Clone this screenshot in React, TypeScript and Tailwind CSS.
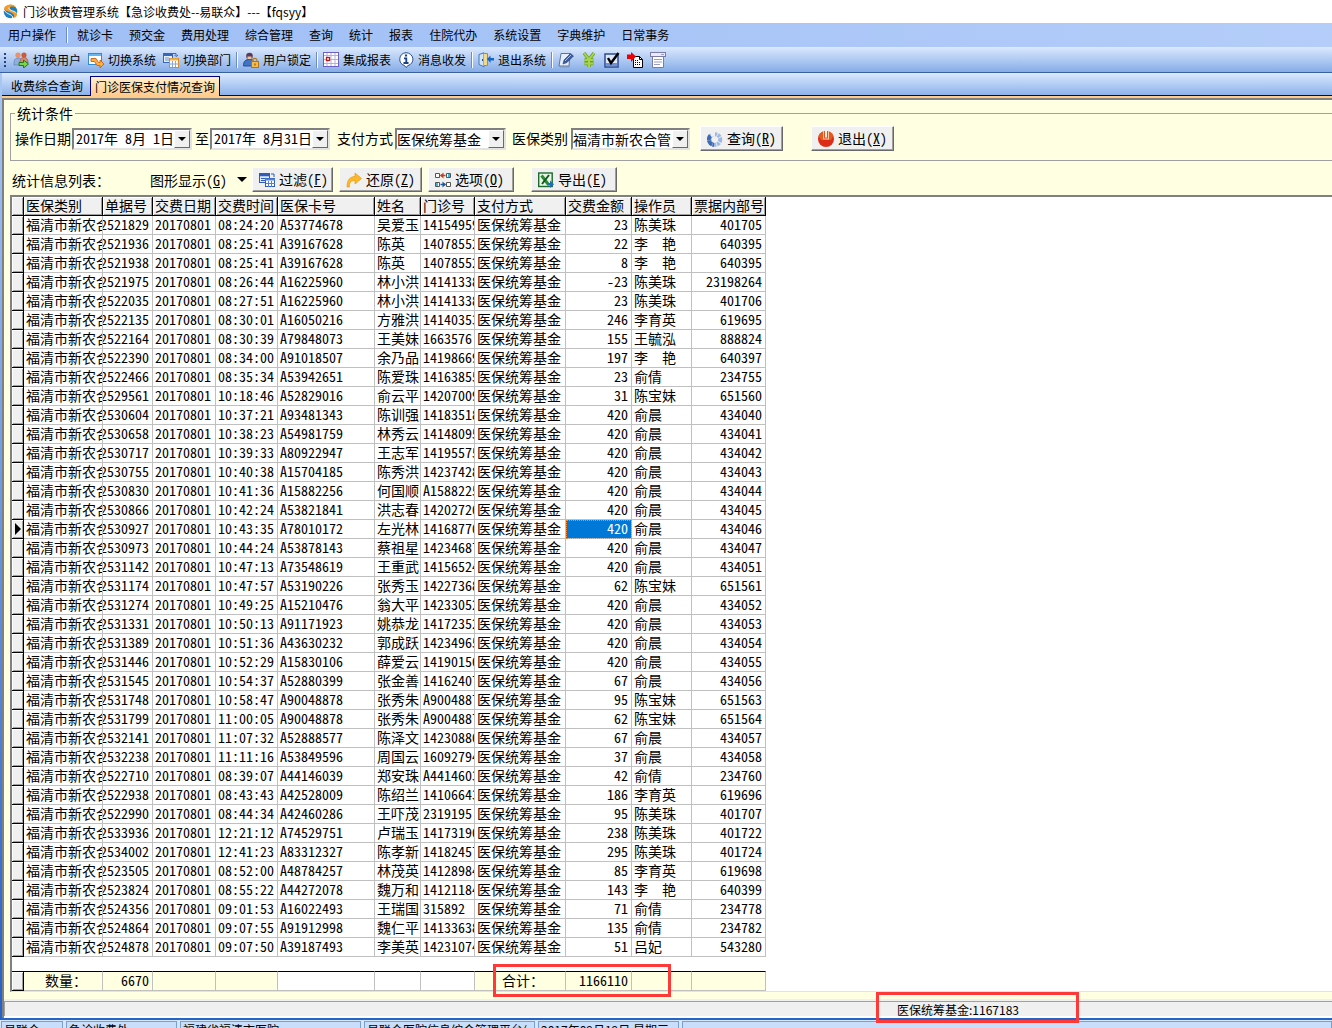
import { useState } from 'react';
import type { ReactNode } from 'react';
import clsx from 'clsx';

const menus = ['就诊卡', '预交金', '费用处理', '综合管理', '查询', '统计', '报表', '住院代办', '系统设置', '字典维护', '日常事务'];

const columns = ['医保类别', '单据号', '交费日期', '交费时间', '医保卡号', '姓名', '门诊号', '支付方式', '交费金额', '操作员', '票据内部号'];
const rightAligned = [1, 8, 10];

// 单据号, 交费时间, 医保卡号, 姓名, 门诊号, 交费金额, 操作员, 票据内部号
const records = [
  ['2521829', '08:24:20', 'A53774678', '吴爱玉', '14154959', '23', '陈美珠', '401705'],
  ['2521936', '08:25:41', 'A39167628', '陈英', '14078552', '22', '李　　艳', '640395'],
  ['2521938', '08:25:41', 'A39167628', '陈英', '14078552', '8', '李　　艳', '640395'],
  ['2521975', '08:26:44', 'A16225960', '林小洪', '14141338', '-23', '陈美珠', '23198264'],
  ['2522035', '08:27:51', 'A16225960', '林小洪', '14141338', '23', '陈美珠', '401706'],
  ['2522135', '08:30:01', 'A16050216', '方雅洪', '14140353', '246', '李育英', '619695'],
  ['2522164', '08:30:39', 'A79848073', '王美妹', '1663576', '155', '王毓泓', '888824'],
  ['2522390', '08:34:00', 'A91018507', '余乃品', '14198669', '197', '李　　艳', '640397'],
  ['2522466', '08:35:34', 'A53942651', '陈爱珠', '14163855', '23', '俞倩', '234755'],
  ['2529561', '10:18:46', 'A52829016', '俞云平', '14207009', '31', '陈宝妹', '651560'],
  ['2530604', '10:37:21', 'A93481343', '陈训强', '14183518', '420', '俞晨', '434040'],
  ['2530658', '10:38:23', 'A54981759', '林秀云', '14148095', '420', '俞晨', '434041'],
  ['2530717', '10:39:33', 'A80922947', '王志军', '14195575', '420', '俞晨', '434042'],
  ['2530755', '10:40:38', 'A15704185', '陈秀洪', '14237428', '420', '俞晨', '434043'],
  ['2530830', '10:41:36', 'A15882256', '何国顺', 'A1588225', '420', '俞晨', '434044'],
  ['2530866', '10:42:24', 'A53821841', '洪志春', '14202720', '420', '俞晨', '434045'],
  ['2530927', '10:43:35', 'A78010172', '左光林', '14168770', '420', '俞晨', '434046'],
  ['2530973', '10:44:24', 'A53878143', '蔡祖星', '14234687', '420', '俞晨', '434047'],
  ['2531142', '10:47:13', 'A73548619', '王重武', '14156524', '420', '俞晨', '434051'],
  ['2531174', '10:47:57', 'A53190226', '张秀玉', '14227368', '62', '陈宝妹', '651561'],
  ['2531274', '10:49:25', 'A15210476', '翁大平', '14233052', '420', '俞晨', '434052'],
  ['2531331', '10:50:13', 'A91171923', '姚恭龙', '14172352', '420', '俞晨', '434053'],
  ['2531389', '10:51:36', 'A43630232', '郭成跃', '14234965', '420', '俞晨', '434054'],
  ['2531446', '10:52:29', 'A15830106', '薛爱云', '14190150', '420', '俞晨', '434055'],
  ['2531545', '10:54:37', 'A52880399', '张金善', '14162407', '67', '俞晨', '434056'],
  ['2531748', '10:58:47', 'A90048878', '张秀朱', 'A9004887', '95', '陈宝妹', '651563'],
  ['2531799', '11:00:05', 'A90048878', '张秀朱', 'A9004887', '62', '陈宝妹', '651564'],
  ['2532141', '11:07:32', 'A52888577', '陈泽文', '14230880', '67', '俞晨', '434057'],
  ['2532238', '11:11:16', 'A53849596', '周国云', '16092794', '37', '俞晨', '434058'],
  ['2522710', '08:39:07', 'A44146039', '郑安珠', 'A4414603', '42', '俞倩', '234760'],
  ['2522938', '08:43:43', 'A42528009', '陈绍兰', '14106643', '186', '李育英', '619696'],
  ['2522990', '08:44:34', 'A42460286', '王吓茂', '2319195', '95', '陈美珠', '401707'],
  ['2533936', '12:21:12', 'A74529751', '卢瑞玉', '14173190', '238', '陈美珠', '401722'],
  ['2534002', '12:41:23', 'A83312327', '陈孝新', '14182457', '295', '陈美珠', '401724'],
  ['2523505', '08:52:00', 'A48784257', '林茂英', '14128984', '85', '李育英', '619698'],
  ['2523824', '08:55:22', 'A44272078', '魏万和', '14121184', '143', '李　　艳', '640399'],
  ['2524356', '09:01:53', 'A16022493', '王瑞国', '315892', '71', '俞倩', '234778'],
  ['2524864', '09:07:55', 'A91912998', '魏仁平', '14133638', '135', '俞倩', '234782'],
  ['2524878', '09:07:50', 'A39187493', '李美英', '14231074', '51', '吕妃', '543280'],
];

const rows = records.map(([no, time, card, name, clinic, amount, operator, ticket]) => [
  '福清市新农合', no, '20170801', time, card, name, clinic, '医保统筹基金', amount, operator, ticket,
]);

const summary = ['数量：', '6670', '', '', '', '', '', '合计：', '1166110', '', ''];

function Icon({ children }: { children: ReactNode }) {
  return (
    <svg className="size-4 shrink-0" viewBox="0 0 16 16" fill="none" aria-hidden="true">
      {children}
    </svg>
  );
}

const UsersIcon = () => (
  <Icon>
    <circle cx="5" cy="3" r="2.6" fill="#e8916a" />
    <circle cx="11" cy="3" r="2.6" fill="#c65c3c" />
    <path d="M1 13c0-5 1-7 4-7s4 2 4 7z" fill="#8fb0dc" stroke="#5d7fb5" strokeWidth=".7" />
    <path d="M7 11c0-4 1-5.5 4-5.5s4 2 4 5.5z" fill="#d98873" stroke="#a9553f" strokeWidth=".7" />
    <path d="M6 10.500h4.500V8l5 4-5 4v-2.500H6z" fill="#7fd34b" stroke="#1f7a1a" />
  </Icon>
);

const SystemIcon = () => (
  <Icon>
    <rect x=".5" y="1.500" width="13" height="11" fill="#fff" stroke="#2f8fd6" />
    <path d="M1 3h12" stroke="#63b7ee" strokeWidth="2" />
    <path d="M3 6.500h5l2.500 4H12V8l4 4-4 4v-2.500H9L6.500 9.500H3z" fill="#fbb040" stroke="#c9601c" strokeWidth=".9" />
  </Icon>
);

const DeptIcon = () => (
  <Icon>
    <rect x=".5" y="1.500" width="9" height="9" fill="#e5effc" stroke="#3566b8" />
    <path d="M1 3h8" stroke="#3566b8" strokeWidth="2" />
    <path d="M2 6h4M2 8h4" stroke="#6f94d0" />
    <path d="M10 1.500h3v2M11.500 3l1.500 1.500L15 3" stroke="#3566b8" />
    <rect x="6.500" y="6.500" width="9" height="9" fill="#fff" stroke="#d98d28" />
    <path d="M7 7.500h8" stroke="#f7b24c" strokeWidth="2" />
    <path d="M9.500 9v6M12.500 9v6M7 12h8" stroke="#8aa8d8" />
  </Icon>
);

const LockIcon = () => (
  <Icon>
    <circle cx="6.500" cy="4" r="3.300" fill="#5b3a57" />
    <path d="M4.500 4.500h4v2.500h-4z" fill="#efc19d" />
    <path d="M.5 14c0-5 2-6.500 6-6.500s5 2 5 6.500z" fill="#3f74c4" stroke="#254f95" />
    <path d="M9.500 10V8.500a2.200 2.200 0 0 1 4.400 0V10" stroke="#b77a1f" strokeWidth="1.200" />
    <rect x="8.500" y="9.500" width="7" height="6" fill="#f7b94a" stroke="#b0721b" />
    <path d="M12 11.500v2" stroke="#6b4410" />
  </Icon>
);

const ReportIcon = () => (
  <Icon>
    <rect x=".5" y=".5" width="15" height="14" fill="#fff" stroke="#6b5fc0" />
    <path d="M1 3.500h14M1 7.500h14M1 11.500h14M4 1v13M8 1v13M12 1v13" stroke="#b4aee6" />
    <rect x="3.500" y="5.500" width="3" height="3" fill="#fff" stroke="#c01818" strokeWidth="1.300" />
  </Icon>
);

const InfoIcon = () => (
  <Icon>
    <path d="M8 .7a7 6.600 0 0 1 2 12.900L8 15.500l-1.500-2A7 6.600 0 0 1 8 .7z" fill="#fff" stroke="#23508f" />
    <path d="M8 2.500v2" stroke="#16438c" strokeWidth="2.200" />
    <path d="M6 6.300h2.300v4.500M5.500 11h5" stroke="#16438c" strokeWidth="1.800" />
  </Icon>
);

const ExitIcon = () => (
  <Icon>
    <path d="M1 2.500 6 .8v14L1 12.500z" fill="#cfe3fa" stroke="#4377b8" />
    <path d="M6 1.500h3.500v12H6" fill="#f3d98b" stroke="#b28a36" />
    <path d="M4.500 7v2" stroke="#274f8a" />
    <path d="m9 7 3.500-3.500V6H16v2.500h-3.500V11z" fill="#1565c8" />
  </Icon>
);

const NoteIcon = () => (
  <Icon>
    <path d="M3 1.500h9l-1 12.500H1z" fill="#e6eefb" stroke="#5d7499" />
    <path d="m5 12 1-4 6.500-6.500 3 2.500L9 10.500z" fill="#3e5c9a" stroke="#293f70" strokeWidth=".6" />
    <path d="m7 9 6-6" stroke="#a9c0ec" />
    <path d="M2 15h10" stroke="#8596b5" />
  </Icon>
);

const YuanIcon = () => (
  <Icon>
    <path d="m3 1 5 6.500L13 1M8 7v8M3.500 8h9M3.500 11.500h9" stroke="#6da02a" strokeWidth="3.400" />
    <path d="m3 1 5 6.500L13 1M8 7v8M3.500 8h9M3.500 11.500h9" stroke="#a6d44b" strokeWidth="2" />
  </Icon>
);

const TickIcon = () => (
  <Icon>
    <rect x="1" y="2" width="13" height="13" fill="#dfe9fb" stroke="#2c4b94" strokeWidth="1.500" />
    <path d="M2 12.500h11" stroke="#6f8fd8" strokeWidth="3" />
    <path d="m4 6 3 5L14.500 1" stroke="#000" strokeWidth="2.400" />
  </Icon>
);

const TransferIcon = () => (
  <Icon>
    <path d="M6.500 4.500h6l3 3v8h-9z" fill="#fff" stroke="#000" />
    <path d="M12.500 4.500v3h3" stroke="#000" />
    <path d="M8 8.500h3M8 10.500h6M8 12.500h6" stroke="#000" strokeDasharray="1 1" />
    <path d="M0 2.500h4V0l5 4.500L4 10V7H0z" fill="#f00000" />
  </Icon>
);

const FormIcon = () => (
  <Icon>
    <path d="M2.500 4.500h11v11h-11z" fill="#fff" stroke="#7a7ca8" />
    <rect x=".5" y=".5" width="15" height="4" fill="#eceaf8" stroke="#7a7ca8" />
    <path d="M11 2.500h3M4 7.500h8M4 10h8M4 12.500h6" stroke="#9a9cc6" />
  </Icon>
);

const QueryIcon = () => (
  <Icon>
    <circle cx="8" cy="8.500" r="5.300" stroke="#9db8e2" strokeWidth="4" strokeDasharray="2.600 .8" />
    <path d="M3.500 4.500A5.500 5.500 0 0 0 7 13.900" stroke="#3d6cb4" strokeWidth="4" strokeDasharray="5 .5" />
    <path d="M4 0h4v5.500H4z" fill="#f0f0f0" />
  </Icon>
);

const PowerIcon = () => (
  <Icon>
    <circle cx="8" cy="8" r="8" fill="#dc2b17" />
    <path d="M.6 5a8 8 0 0 1 14.800 0L13 9H3z" fill="#e9591b" />
    <path d="M5 0h6v8.500H5z" fill="#f3c9a0" />
    <path d="M6 0h4v7.500H6z" fill="#e8501c" />
    <path d="M8 0v6.500" stroke="#fff" strokeWidth="1.800" />
  </Icon>
);

const FilterIcon = () => (
  <Icon>
    <rect x=".5" y="1.500" width="10" height="9" fill="#dce8fb" stroke="#2e5cb8" />
    <path d="M0 3h11" stroke="#2e5cb8" strokeWidth="2.500" />
    <path d="M2 6.500h4M2 8.500h4M12 2h3v3" stroke="#2e5cb8" />
    <rect x="6.500" y="6.500" width="9" height="8" fill="#fff" stroke="#2e5cb8" />
    <path d="M6 7.500h10" stroke="#4f80da" strokeWidth="2" />
    <path d="M9.500 9v6M12.500 9v6M7 11.500h9" stroke="#4f80da" />
  </Icon>
);

const RestoreIcon = () => (
  <Icon>
    <path d="M1 15C1 8 4 4.500 9 4.500V1l6.500 5.500L9 12V8.500c-4 0-6 2-5.500 6.500z" fill="#fbb829" stroke="#e89a15" strokeWidth=".7" />
  </Icon>
);

const OptionsIcon = () => (
  <Icon>
    <path d="M.5 1.500h4v4h-4zM11.500 1.500h4v4h-4zM.5 10.500h4v4h-4zM11.500 10.500h4v4h-4z" fill="#fff" stroke="#555" />
    <path d="M13 2h2v3h-2zM1 11h2v3H1z" fill="#37b6e8" />
    <path d="M5.500 3.500h5" stroke="#c2401c" strokeWidth="1.500" />
    <path d="M8.500.5 5 3.500l3.500 3z" fill="#c2401c" />
    <path d="M5.500 12.500h5" stroke="#1c5a9c" strokeWidth="1.500" />
    <path d="m7.500 9.500 3.500 3-3.500 3z" fill="#1c5a9c" />
  </Icon>
);

const ExcelIcon = () => (
  <Icon>
    <rect x=".7" y="1" width="13.500" height="13.500" fill="#e9f6e6" stroke="#1c6b2c" strokeWidth="1.400" />
    <path d="m3.500 3.500 6.500 8.500" stroke="#2a8a38" strokeWidth="3" />
    <path d="m11 3-7 9" stroke="#14581f" strokeWidth="2" />
    <path d="M9 11h3V8.500l4 3.700-4 3.800v-2.500H9z" fill="#1f6fb8" />
  </Icon>
);

function ToolItem({ icon, label }: { icon: ReactNode; label: string }) {
  return (
    <button className="flex items-center gap-1 whitespace-nowrap">
      {icon}
      {label}
    </button>
  );
}

const Divider = () => <span className="-mx-0.5 h-4 w-0.5 border-l border-r border-l-[#6a8ccb] border-r-white" />;

function PushButton({ icon, label, hotkey, className }: { icon: ReactNode; label: string; hotkey: string; className?: string }) {
  return (
    <button
      className={clsx(
        'flex h-[25px] items-center gap-1 border border-t-white border-l-white border-r-[#696969] border-b-[#696969] bg-[#f0f0f0] pl-1.5 whitespace-nowrap shadow-[inset_-1px_-1px_#a0a0a0]',
        className,
      )}
    >
      {icon}
      <span className="pb-0.5">
        {label}(<u>{hotkey}</u>)
      </span>
    </button>
  );
}

const Caret = () => (
  <span className="flex h-full w-4 items-center justify-center border border-t-white border-l-white border-r-[#696969] border-b-[#696969] bg-[#f0f0f0]">
    <svg className="h-1 w-2" viewBox="0 0 8 4" aria-hidden="true">
      <path d="M0 0h8L4 4z" fill="#000" />
    </svg>
  </span>
);

const sunken = 'h-[22px] border-2 border-t-[#808080] border-l-[#808080] border-r-[#e3e3e3] border-b-[#e3e3e3] bg-white';

function DateField({ id, value, className }: { id: string; value: string; className?: string }) {
  return (
    <div className={clsx('flex', sunken, className)}>
      <input id={id} type="text" defaultValue={value} className="min-w-0 flex-1 pb-0.5 pl-0.5 leading-4 outline-none [font-feature-settings:'hwid']" />
      <button aria-label="打开日历">
        <Caret />
      </button>
    </div>
  );
}

function SelectField({ id, options, className }: { id: string; options: string[]; className?: string }) {
  return (
    <div className={clsx('relative', sunken, className)}>
      <select id={id} className="h-full w-full appearance-none overflow-hidden pr-4 pb-0.5 leading-4 outline-none">
        {options.map(o => <option key={o}>{o}</option>)}
      </select>
      <span className="pointer-events-none absolute inset-y-0 right-0">
        <Caret />
      </span>
    </div>
  );
}

function IndicatorCell({ current }: { current?: boolean }) {
  return (
    <td className="border-r border-b border-black bg-[#f0f0f0] p-0 shadow-[inset_1px_1px_#fff,inset_-1px_-1px_#a0a0a0]">
      {current && (
        <svg className="ml-[3px] h-3 w-1.5" viewBox="0 0 6 12" aria-label="当前行">
          <path d="M0 0l6 6-6 6z" fill="#000" />
        </svg>
      )}
    </td>
  );
}

export default function App() {
  const [current, setCurrent] = useState(16);
  const [tab, setTab] = useState('门诊医保支付情况查询');

  return (
    <div className="flex h-screen flex-col overflow-hidden bg-white font-['Noto_Sans_CJK_SC',sans-serif] text-xs text-black">
      {/* 标题栏 */}
      <header className="flex h-[23px] shrink-0 items-center gap-1 pl-[3px]">
        <Icon>
          <circle cx="7.500" cy="7.500" r="6.800" fill="#1c7fc0" />
          <path d="M1 4C3 0 11-1 13 3.500 9 1.500 6 2.500 7 5c1.500 2.500 7 2.500 7 5.500 0 2-2 3.500-4 3.500 2-2.500 1-4-2-5.500S2 7.500 1 4z" fill="#f59a23" />
          <path d="M1 5.500c1 3 4 4 6 5s3 2 2.500 3.500M6 3.500c-1 3 5 3 7.500 5.500" stroke="#fff" strokeWidth=".9" />
        </Icon>
        <h1>门诊收费管理系统【急诊收费处--易联众】---【fqsyy】</h1>
      </header>

      <nav className="flex h-6 shrink-0 items-center gap-4 bg-linear-to-r from-[#9ebef5] to-[#b4cdf9] pl-2">
        <button>用户操作</button>
        <span className="-mr-[7px] -ml-1.5 h-4 w-0.5 border-l border-r border-l-[#6a8ccb] border-r-white" />
        {menus.map(m => (
          <button key={m} className="whitespace-nowrap">{m}</button>
        ))}
      </nav>

      <div className="flex h-[26px] shrink-0 items-center gap-[7px] border-b border-[#3b619c] bg-linear-to-b from-[#dbe9fd] to-[#86ace6] pl-1">
        <span className="h-3.5 w-0.5 border-l-2 border-dotted border-[#27417a]" />
        <ToolItem icon={<UsersIcon />} label="切换用户" />
        <ToolItem icon={<SystemIcon />} label="切换系统" />
        <ToolItem icon={<DeptIcon />} label="切换部门" />
        <Divider />
        <ToolItem icon={<LockIcon />} label="用户锁定" />
        <Divider />
        <ToolItem icon={<ReportIcon />} label="集成报表" />
        <ToolItem icon={<InfoIcon />} label="消息收发" />
        <Divider />
        <ToolItem icon={<ExitIcon />} label="退出系统" />
        <Divider />
        <button aria-label="编辑"><NoteIcon /></button>
        <button aria-label="收费"><YuanIcon /></button>
        <button aria-label="审核"><TickIcon /></button>
        <button aria-label="转单"><TransferIcon /></button>
        <button aria-label="表单"><FormIcon /></button>
      </div>

      <div className="flex min-h-0 flex-1 flex-col bg-linear-to-b from-[#a9c7f2] to-[#2460c8] pl-0.5">
        {/* 页签 */}
        <div className="flex h-[23px] shrink-0 items-end gap-0.5 border-b border-[#000080] bg-linear-to-b from-[#dbe9fd] to-[#8db2ea] pl-1">
          {['收费综合查询', '门诊医保支付情况查询'].map(t => (
            <button
              key={t}
              onClick={() => setTab(t)}
              className={clsx(
                'border-x border-t px-1 leading-[18px] whitespace-nowrap',
                t === tab ? '-mb-px h-5 border-[#000080] bg-linear-to-b from-[#fff0d0] to-[#ffcb8b]' : 'h-[19px] border-transparent',
              )}
            >
              {t}
            </button>
          ))}
        </div>
        <div className="h-0.5 shrink-0 bg-[#ffcb8b]" />

        <main className="flex min-h-0 flex-1 flex-col border-t-2 border-l-2 border-[#808080] bg-[#ffffe1] text-sm leading-[18px]">
          <form className="pt-1.5 pl-1.5" onSubmit={e => e.preventDefault()}>
            <fieldset className="border border-r-0 border-[#a0a0a0] pt-1.5 pb-[9px] pl-1">
              <legend className="px-0.5 leading-[14px]">统计条件</legend>
              <div className="flex h-[25px] items-center whitespace-nowrap">
                <label htmlFor="from" className="pb-0.5">操作日期</label>
                <DateField id="from" value="2017年 8月 1日" className="mr-[3px] ml-px w-[120px]" />
                <label htmlFor="to" className="pb-0.5">至</label>
                <DateField id="to" value="2017年 8月31日" className="mr-[7px] ml-px w-[120px]" />
                <label htmlFor="pay" className="pb-0.5">支付方式</label>
                <SelectField id="pay" options={['医保统筹基金']} className="mr-1.5 ml-0.5 w-[111px]" />
                <label htmlFor="kind" className="pb-0.5">医保类别</label>
                <SelectField id="kind" options={['福清市新农合管']} className="mr-2.5 ml-[3px] w-[119px]" />
                <PushButton icon={<QueryIcon />} label="查询" hotkey="R" className="w-[83px] [font-feature-settings:'hwid']" />
                <PushButton icon={<PowerIcon />} label="退出" hotkey="X" className="ml-7 w-[83px] [font-feature-settings:'hwid']" />
              </div>
            </fieldset>
          </form>

          <div className="mt-1.5 mb-[3px] flex h-[25px] shrink-0 items-center pl-2 whitespace-nowrap [font-feature-settings:'hwid']">
            <span className="w-[138px]">统计信息列表：</span>
            <button className="mr-[5px] flex items-center gap-2.5">
              <span>图形显示(<u>G</u>)</span>
              <svg className="h-[5px] w-2.5" viewBox="0 0 10 5" aria-hidden="true">
                <path d="M0 0h10L5 5z" fill="#000" />
              </svg>
            </button>
            <PushButton icon={<FilterIcon />} label="过滤" hotkey="F" className="mr-1.5 w-[81px]" />
            <PushButton icon={<RestoreIcon />} label="还原" hotkey="Z" className="mr-1.5 w-[83px]" />
            <PushButton icon={<OptionsIcon />} label="选项" hotkey="O" className="w-[86px]" />
            <PushButton icon={<ExcelIcon />} label="导出" hotkey="E" className="ml-[17px] w-[86px]" />
          </div>

          <div className="relative ml-1.5 min-h-0 flex-1 border-t-2 border-l-2 border-b border-t-[#808080] border-l-[#808080] border-b-[#e3e3e3] bg-white">
            <table className="w-[754px] table-fixed border-separate border-spacing-0 leading-4 [font-feature-settings:'hwid']">
              <colgroup>
                <col className="w-3" />
                <col className="w-[79px]" />
                <col className="w-[50px]" />
                <col className="w-[63px]" />
                <col className="w-[62px]" />
                <col className="w-[97px]" />
                <col className="w-[46px]" />
                <col className="w-[54px]" />
                <col className="w-[91px]" />
                <col className="w-[66px]" />
                <col className="w-[60px]" />
                <col className="w-[74px]" />
              </colgroup>
              <thead>
                <tr className="h-[19px]">
                  <IndicatorCell />
                  {columns.map(c => (
                    <th key={c} className="overflow-hidden border-r border-b border-black bg-[#f0f0f0] p-0 pb-0.5 pl-0.5 text-left font-normal whitespace-nowrap shadow-[inset_1px_1px_#fff,inset_-1px_-1px_#a0a0a0]">
                      {c}
                    </th>
                  ))}
                </tr>
              </thead>
              <tbody>
                {rows.map((row, r) => (
                  <tr key={r} className="h-[19px]" onClick={() => setCurrent(r)}>
                    <IndicatorCell current={r === current} />
                    {row.map((value, c) => (
                      <td
                        key={c}
                        className={clsx(
                          'overflow-hidden border-r border-b border-[#c0c0c0] p-0 pb-0.5 whitespace-nowrap',
                          r === current && c === 8 && 'bg-[#0078d7] text-white outline outline-dotted -outline-offset-1 outline-[#ff8728]',
                        )}
                      >
                        <div className={clsx('flex', rightAligned.includes(c) ? 'justify-end pr-[3px]' : 'pl-0.5')}>{value}</div>
                      </td>
                    ))}
                  </tr>
                ))}
              </tbody>
              <tfoot>
                <tr className="h-[14px]">
                  <td colSpan={12} className="p-0" />
                </tr>
                <tr className="h-5">
                  <td className="border-y border-r border-black bg-[#f0f0f0] p-0 shadow-[inset_1px_1px_#fff,inset_-1px_-1px_#a0a0a0]" />
                  {summary.map((value, c) => (
                    <td
                      key={c}
                      className={clsx(
                        'border-t border-r border-b border-t-black border-r-[#c0c0c0] border-b-[#c0c0c0] p-0 pb-0.5 whitespace-nowrap',
                        c >= 4 && c <= 6 ? 'bg-white' : 'bg-[#ffffe1]',
                        rightAligned.includes(c) ? 'pr-[3px] text-right' : 'pl-1.5 text-center',
                      )}
                    >
                      {value}
                    </td>
                  ))}
                </tr>
              </tfoot>
            </table>
            <div className="absolute -bottom-1.5 left-[481px] z-10 h-[33px] w-[178px] border-3 border-[#ff3838]" />
          </div>
          <div className="h-[7px] shrink-0" />
          <footer className="relative h-[19px] shrink-0 border-t-2 border-b-2 border-t-[#f0f0f0] border-b-white bg-[#f0f0f0] text-xs">
            <div className="h-[15px] border-t border-l border-[#a0a0a0] pl-[892px] leading-[15px]">医保统筹基金:1167183</div>
            <div className="absolute -top-[9px] left-[872px] z-10 h-[31px] w-[203px] border-3 border-[#ff3838]" />
          </footer>
        </main>
        <div className="h-0.5 shrink-0 bg-[#2664c8]" />
      </div>

      {/* 底部状态栏，只露出上沿 */}
      <div className="flex h-2 shrink-0 gap-[3px] overflow-hidden bg-[#d6e6fb] pt-px pl-px text-xs leading-[15px] whitespace-nowrap">
        {[
          ['易联众', 'w-[62px]'],
          ['急诊收费处', 'w-[111px]'],
          ['福建省福清市医院', 'w-[181px]'],
          ['易联众医院信息综合管理平台(', 'w-[171px]'],
          ['2017年09月19日  星期三', 'w-[141px]'],
          ['', 'flex-1'],
        ].map(([text, width]) => (
          <span key={text} className={clsx('h-5 shrink-0 overflow-hidden border border-[#7a9fd4] bg-[#c9defa] pl-0.5', width)}>
            {text}
          </span>
        ))}
      </div>
    </div>
  );
}
